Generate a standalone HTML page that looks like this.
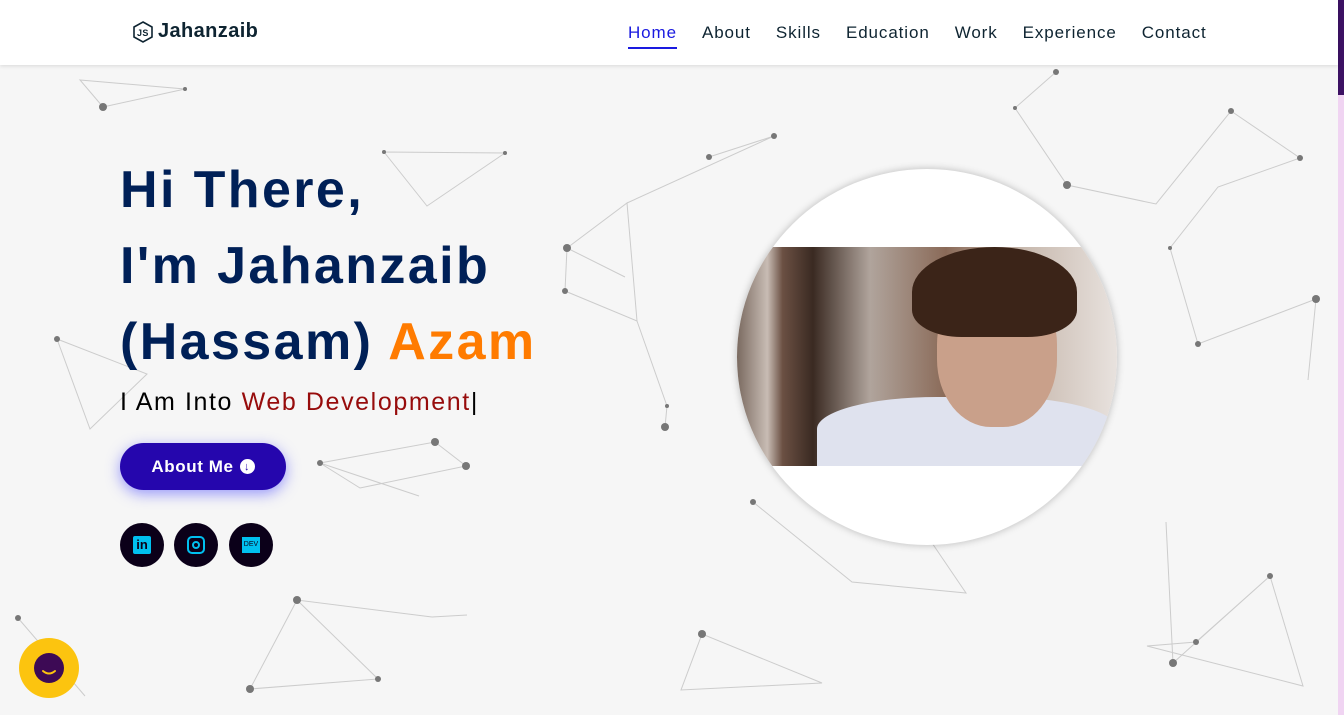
<!DOCTYPE html>
<html><head><style>
*{margin:0;padding:0;box-sizing:border-box}
body{width:1344px;height:715px;overflow:hidden;background:#f6f6f6;font-family:"Liberation Sans",sans-serif;position:relative}
header{position:absolute;top:0;left:0;width:1338px;height:65px;background:#fff;box-shadow:0 1px 4px rgba(0,0,0,.12);z-index:5}
.logo{position:absolute;left:132px;top:20px;font-size:20px;font-weight:bold;color:#0e2431;display:flex;align-items:center;gap:4px;letter-spacing:.4px}
nav{position:absolute;left:628px;top:23px;display:flex;gap:25px;font-size:17px;color:#0e2431;letter-spacing:.9px}
nav span.act{color:#1a1ae0;border-bottom:2px solid #1a1ae0;padding-bottom:4px}
h1{position:absolute;left:120px;top:152px;font-size:52px;line-height:76px;color:#002057;font-weight:bold;z-index:2;letter-spacing:2.4px}
.sub{position:absolute;left:120px;top:388px;font-size:25px;color:#000;z-index:2;letter-spacing:1.6px}
.btn{position:absolute;left:120px;top:443px;width:166px;height:47px;border-radius:24px;background:#2506ad;color:#fff;font-weight:bold;font-size:17px;display:flex;align-items:center;justify-content:center;gap:6px;box-shadow:0 4px 14px rgba(60,60,255,.5);z-index:2;letter-spacing:.6px}
.soc{position:absolute;top:523px;width:44px;height:44px;border-radius:50%;background:#0b0019;display:flex;align-items:center;justify-content:center;z-index:2}
.img{position:absolute;left:737px;top:169px;width:380px;height:376px;border-radius:50%;background:#fff;overflow:hidden;box-shadow:0 0 8px rgba(0,0,0,.25)}
.photo{position:absolute;left:0;top:78px;width:380px;height:219px;overflow:hidden;background:linear-gradient(90deg,#7a6a60 0,#c8bcb4 8%,#6b5043 12%,#3a2a22 20%,#b0a49c 35%,#8a6a58 55%,#c7b8ad 75%,#e8e2de 100%)}
.face{position:absolute;left:200px;top:30px;width:120px;height:150px;border-radius:45%;background:#c9a08a}
.hair{position:absolute;left:175px;top:0;width:165px;height:90px;border-radius:50% 50% 30% 30%;background:#3b2418}
.shirt{position:absolute;left:80px;top:150px;width:300px;height:80px;border-radius:40% 40% 0 0;background:#dfe2ee}
.chat{position:absolute;left:19px;top:638px;width:60px;height:60px;border-radius:50%;background:#fcc40f;display:flex;align-items:center;justify-content:center}
.sb{position:absolute;right:0;top:0;width:6px;height:715px;background:#f0d4f2}
</style></head><body>
<svg style="position:absolute;left:0;top:0" width="1344" height="715">
<g stroke="#bbb" stroke-width="1" fill="none" opacity=".7">
<polyline points="103,107 80,80 185,89 103,107"/>
<polyline points="384,152 505,153 427,206 384,152"/>
<polyline points="567,248 627,203 637,321 565,291 567,248 625,277"/>
<polyline points="709,157 774,136 627,203"/>
<polyline points="1056,72 1015,108 1067,185 1156,204 1231,111 1300,158 1218,187 1170,248 1198,344 1316,299 1308,380"/>
<polyline points="57,339 147,374 90,429 57,339"/>
<polyline points="320,463 435,442 466,466 360,488 320,463 419,496"/>
<polyline points="297,600 250,689 378,679 297,600 432,617 467,615"/>
<polyline points="702,634 681,690 822,683 702,634"/>
<polyline points="1166,522 1173,663 1270,576 1303,686 1147,646 1196,642 1270,576"/>
<polyline points="18,618 85,696"/>
<polyline points="753,502 852,582 966,593 930,540"/>
<polyline points="665,427 667,406 637,321"/>
</g>
<g fill="#777">
<circle cx="103" cy="107" r="4"/><circle cx="185" cy="89" r="2"/><circle cx="384" cy="152" r="2"/><circle cx="505" cy="153" r="2"/><circle cx="567" cy="248" r="4"/><circle cx="565" cy="291" r="3"/><circle cx="709" cy="157" r="3"/><circle cx="774" cy="136" r="3"/><circle cx="1056" cy="72" r="3"/><circle cx="1015" cy="108" r="2"/><circle cx="1067" cy="185" r="4"/><circle cx="1231" cy="111" r="3"/><circle cx="1300" cy="158" r="3"/><circle cx="1170" cy="248" r="2"/><circle cx="1198" cy="344" r="3"/><circle cx="1316" cy="299" r="4"/><circle cx="57" cy="339" r="3"/><circle cx="435" cy="442" r="4"/><circle cx="466" cy="466" r="4"/><circle cx="320" cy="463" r="3"/><circle cx="297" cy="600" r="4"/><circle cx="250" cy="689" r="4"/><circle cx="378" cy="679" r="3"/><circle cx="702" cy="634" r="4"/><circle cx="665" cy="427" r="4"/><circle cx="753" cy="502" r="3"/><circle cx="1173" cy="663" r="4"/><circle cx="1196" cy="642" r="3"/><circle cx="1270" cy="576" r="3"/><circle cx="18" cy="618" r="3"/><circle cx="667" cy="406" r="2"/>
</g></svg>
<header>
<div class="logo"><svg width="22" height="22" viewBox="0 0 22 22"><path d="M11 1 L20 6 V16 L11 21 L2 16 V6 Z" fill="none" stroke="#0e2431" stroke-width="1.6"/><text x="5" y="15" font-size="9" font-family="Liberation Sans" fill="#0e2431">JS</text></svg>Jahanzaib</div>
<nav><span class="act">Home</span><span>About</span><span>Skills</span><span>Education</span><span>Work</span><span>Experience</span><span>Contact</span></nav>
</header>
<div class="sb"><div style="height:95px;background:#3c1163"></div></div>
<h1>Hi There,<br>I'm Jahanzaib<br>(Hassam) <span style="color:#ff7b00">Azam</span></h1>
<div class="sub">I Am Into <span style="color:#970c0c">Web Development</span>|</div>
<div class="btn">About Me <span style="display:inline-flex;width:15px;height:15px;border-radius:50%;background:#fff;color:#2506ad;font-size:11px;align-items:center;justify-content:center">↓</span></div>
<div class="soc" style="left:120px"><div style="width:18px;height:18px;background:#00c0f0;border-radius:2px;color:#0b0019;font-weight:bold;font-size:13px;line-height:18px;text-align:center">in</div></div>
<div class="soc" style="left:174px"><div style="width:18px;height:18px;border:2.5px solid #00c0f0;border-radius:5px;display:flex;align-items:center;justify-content:center"><div style="width:8px;height:8px;border:2px solid #00c0f0;border-radius:50%"></div></div></div>
<div class="soc" style="left:229px"><div style="width:18px;height:16px;background:#00c0f0;color:#0b0019;font-size:7px;line-height:16px;text-align:center">DEV</div></div>
<div class="img"><div class="photo"><div class="shirt"></div><div class="face"></div><div class="hair"></div></div></div>
<div class="chat"><svg width="32" height="32" viewBox="0 0 32 32"><circle cx="16" cy="16" r="15" fill="#3d0a55"/><path d="M10 19 Q16 24 22 19" stroke="#fcc40f" stroke-width="2" fill="none" stroke-linecap="round"/></svg></div>
</body></html>
